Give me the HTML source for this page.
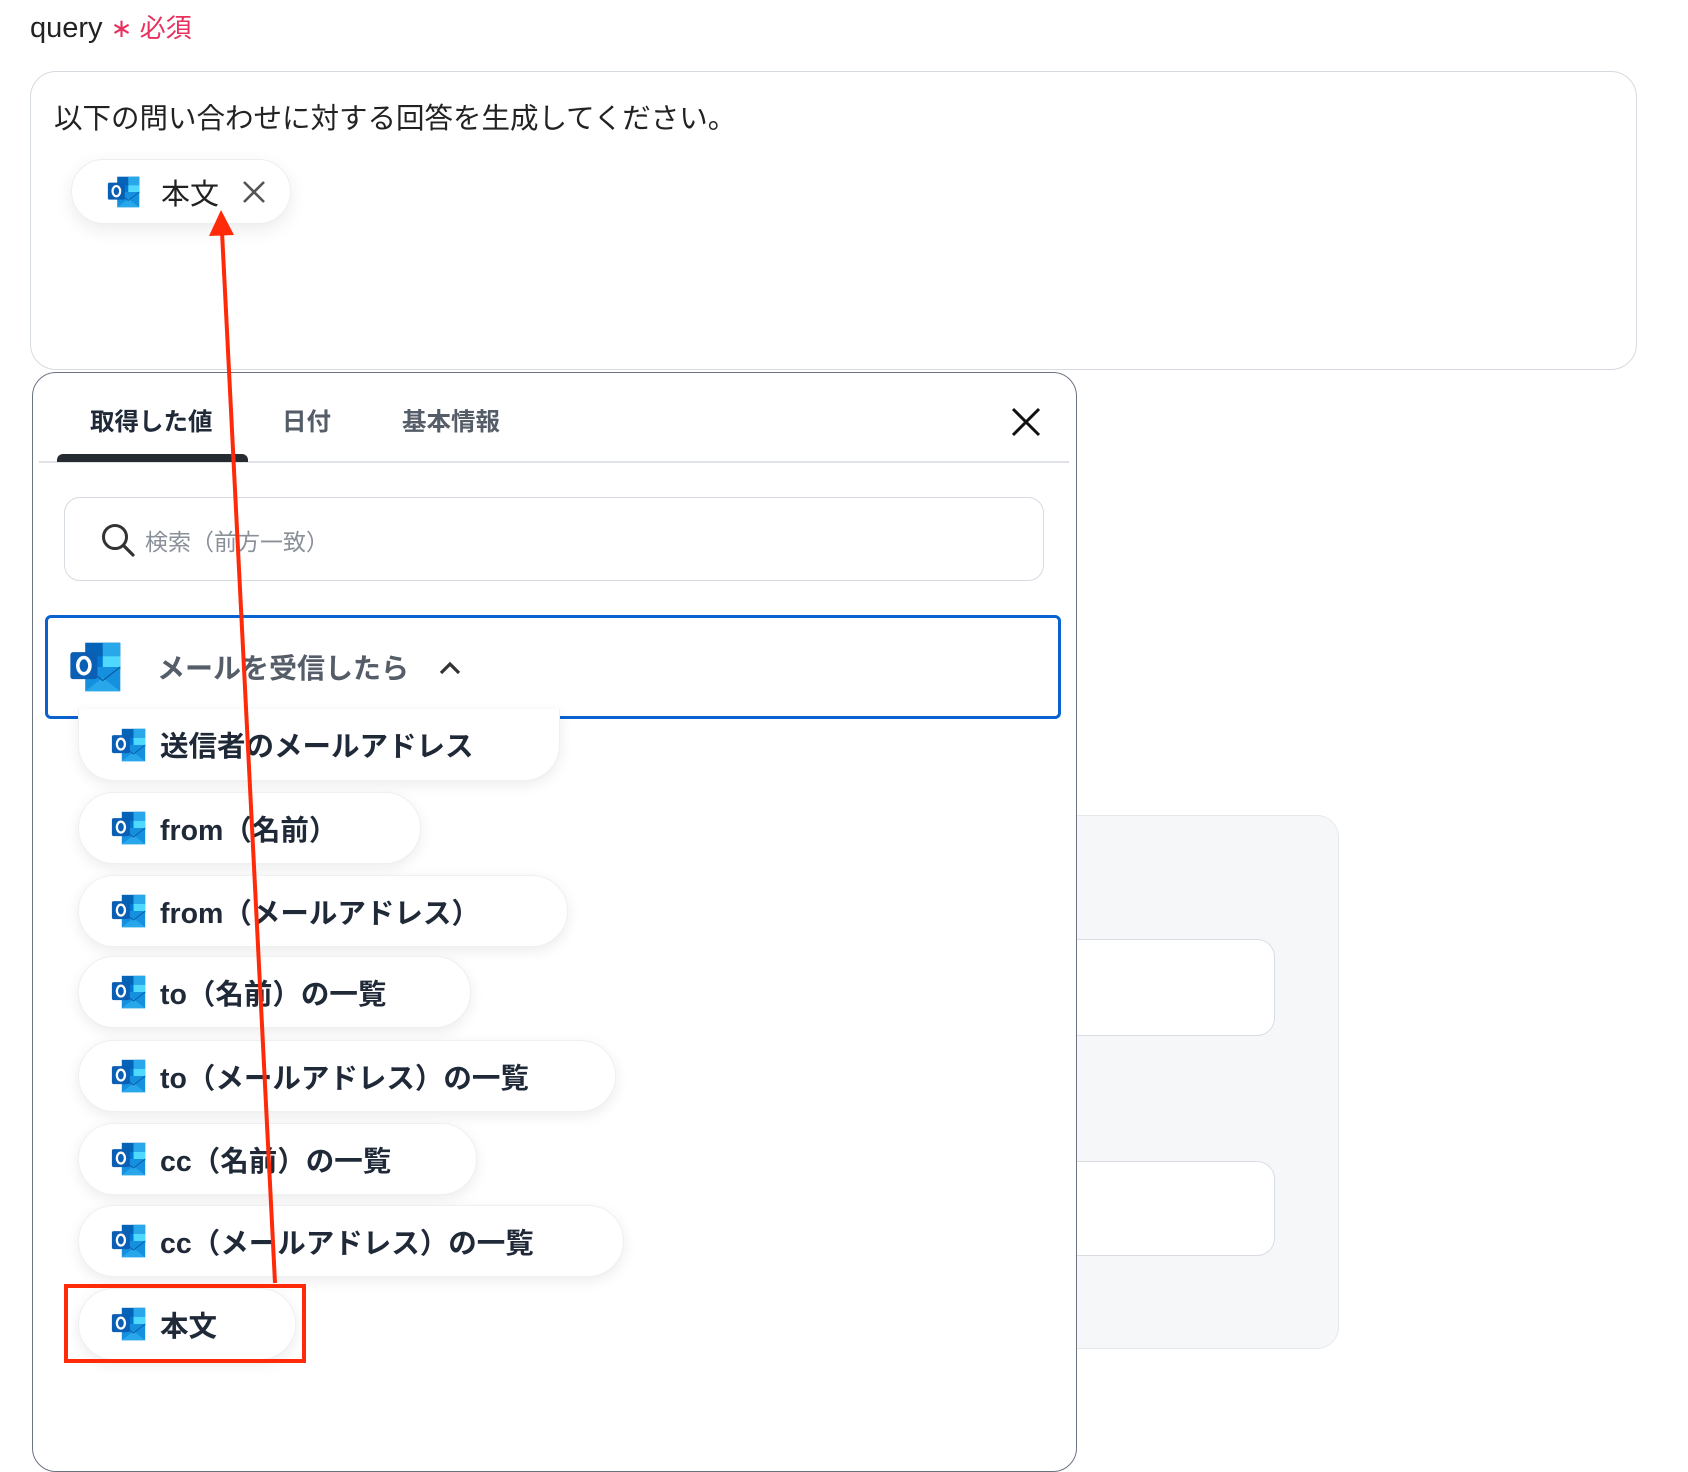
<!DOCTYPE html>
<html><head><meta charset="utf-8"><style>
*{box-sizing:border-box;margin:0;padding:0}
body{width:1688px;height:1372px;background:#fff;position:relative;overflow:hidden;font-family:"Liberation Sans","Noto Sans CJK JP",sans-serif;color:#1f2937}
.abs{position:absolute}
.pill{position:absolute;left:78px;height:72px;background:#fff;border-radius:36px;box-shadow:0 4px 14px rgba(0,0,0,0.08);border:1px solid #eef0f3;display:flex;align-items:center;padding-left:32px;font-weight:bold;font-size:28.5px;color:#1f2937;white-space:nowrap}
.pill svg{margin-right:13px}
</style></head><body>
<svg width="0" height="0" style="position:absolute"><defs>
<symbol id="ol" viewBox="0 0 40 40">
<rect x="12" y="2" width="26" height="20" fill="#0364b8"/>
<rect x="25" y="2" width="13" height="10" fill="#28a8ea"/>
<rect x="12" y="12" width="13" height="10" fill="#0078d4"/>
<rect x="25" y="12" width="13" height="10" fill="#50d9ff"/>
<path d="M12 20 L38 20 L38 38 L12 38 Z" fill="#1490df"/>
<path d="M12 38 L25 28 L38 38 Z" fill="#28a8ea"/>
<path d="M12 20 L25 30 L38 20" fill="none" stroke="#0a5fa8" stroke-width="1"/>
<rect x="1" y="9" width="20" height="20" rx="2" fill="#0a5fb4"/>
<ellipse cx="11" cy="19" rx="4.5" ry="6" fill="none" stroke="#fff" stroke-width="2.6"/>
</symbol></defs></svg>

<div class="abs" style="left:30px;top:8px;font-size:29px;color:#222">query <span style="color:#e8315f;font-size:26px">∗ 必須</span></div>

<div class="abs" style="left:30px;top:71px;width:1607px;height:299px;border:1.5px solid #d6dbe1;border-radius:26px"></div>
<div class="abs" style="left:54px;top:96px;font-size:28.5px;color:#222">以下の問い合わせに対する回答を生成してください。</div>
<div class="abs" style="left:71px;top:159px;width:220px;height:65px;border-radius:33px;background:#fff;border:1px solid #eceef1;box-shadow:0 6px 18px rgba(0,0,0,0.08);display:flex;align-items:center;padding-left:35px;font-size:29px;color:#222">
<svg width="34" height="34"><use href="#ol"/></svg><span style="margin-left:20px">本文</span>
<svg width="26" height="26" style="margin-left:22px" viewBox="0 0 26 26"><path d="M3 3L23 23M23 3L3 23" stroke="#555" stroke-width="2.6"/></svg></div>

<div class="abs" style="left:1040px;top:815px;width:299px;height:534px;background:#f6f7f9;border:1.5px solid #e6e8ec;border-radius:22px"></div>
<div class="abs" style="left:1000px;top:939px;width:275px;height:97px;background:#fff;border:1.5px solid #d9dde3;border-radius:18px"></div>
<div class="abs" style="left:1000px;top:1161px;width:275px;height:95px;background:#fff;border:1.5px solid #d9dde3;border-radius:18px"></div>

<div class="abs" style="left:32px;top:372px;width:1045px;height:1100px;background:#fff;border:1.5px solid #6b7280;border-radius:24px"></div>
<div class="abs" style="left:90px;top:403px;font-size:24.5px;font-weight:bold;color:#1f2937">取得した値</div>
<div class="abs" style="left:282px;top:403px;font-size:24.5px;font-weight:bold;color:#555d69">日付</div>
<div class="abs" style="left:402px;top:403px;font-size:24.5px;font-weight:bold;color:#555d69">基本情報</div>
<svg class="abs" style="left:1010px;top:406px" width="32" height="32" viewBox="0 0 32 32"><path d="M3 3L29 29M29 3L3 29" stroke="#111" stroke-width="3"/></svg>
<div class="abs" style="left:39px;top:461px;width:1030px;height:2px;background:#dfe2e6"></div>
<div class="abs" style="left:57px;top:454px;width:191px;height:8px;background:#262a31;border-radius:6px 6px 0 0"></div>

<div class="abs" style="left:64px;top:497px;width:980px;height:84px;border:1.5px solid #d6dbe1;border-radius:16px"></div>
<svg class="abs" style="left:100px;top:522px" width="36" height="36" viewBox="0 0 36 36"><circle cx="15" cy="15" r="11.5" fill="none" stroke="#333" stroke-width="3"/><path d="M23.5 23.5L33 33" stroke="#333" stroke-width="3.2" stroke-linecap="round"/></svg>
<div class="abs" style="left:145px;top:523px;font-size:23px;color:#8a9099">検索（前方一致）</div>

<div class="abs" style="left:45px;top:615px;width:1016px;height:104px;border:3px solid #0a62d0;border-radius:6px"></div>
<svg class="abs" style="left:69px;top:640px" width="54" height="54"><use href="#ol"/></svg>
<div class="abs" style="left:157px;top:647px;font-size:28px;font-weight:bold;color:#555d69">メールを受信したら</div>
<svg class="abs" style="left:437px;top:659px" width="26" height="18" viewBox="0 0 26 18"><path d="M4 14L13 5L22 14" fill="none" stroke="#333" stroke-width="3.2"/></svg>

<div class="pill" style="top:709px;width:482px;border-radius:0 0 36px 36px;border-top:none"><svg width="36" height="36"><use href="#ol"/></svg>送信者のメールアドレス</div>
<div class="pill" style="top:792px;width:343px"><svg width="36" height="36"><use href="#ol"/></svg>from（名前）</div>
<div class="pill" style="top:875px;width:490px"><svg width="36" height="36"><use href="#ol"/></svg>from（メールアドレス）</div>
<div class="pill" style="top:956px;width:393px"><svg width="36" height="36"><use href="#ol"/></svg>to（名前）の一覧</div>
<div class="pill" style="top:1040px;width:538px"><svg width="36" height="36"><use href="#ol"/></svg>to（メールアドレス）の一覧</div>
<div class="pill" style="top:1123px;width:399px"><svg width="36" height="36"><use href="#ol"/></svg>cc（名前）の一覧</div>
<div class="pill" style="top:1205px;width:546px"><svg width="36" height="36"><use href="#ol"/></svg>cc（メールアドレス）の一覧</div>
<div class="pill" style="top:1288px;width:218px"><svg width="36" height="36"><use href="#ol"/></svg>本文</div>

<div class="abs" style="left:64px;top:1284px;width:242px;height:79px;border:4px solid #ff2a0a"></div>
<svg class="abs" style="left:0;top:0" width="1688" height="1372"><line x1="275" y1="1283" x2="222" y2="232" stroke="#ff2a0a" stroke-width="4"/><path d="M221 210L209 236L234 235Z" fill="#ff2a0a"/></svg>
</body></html>
